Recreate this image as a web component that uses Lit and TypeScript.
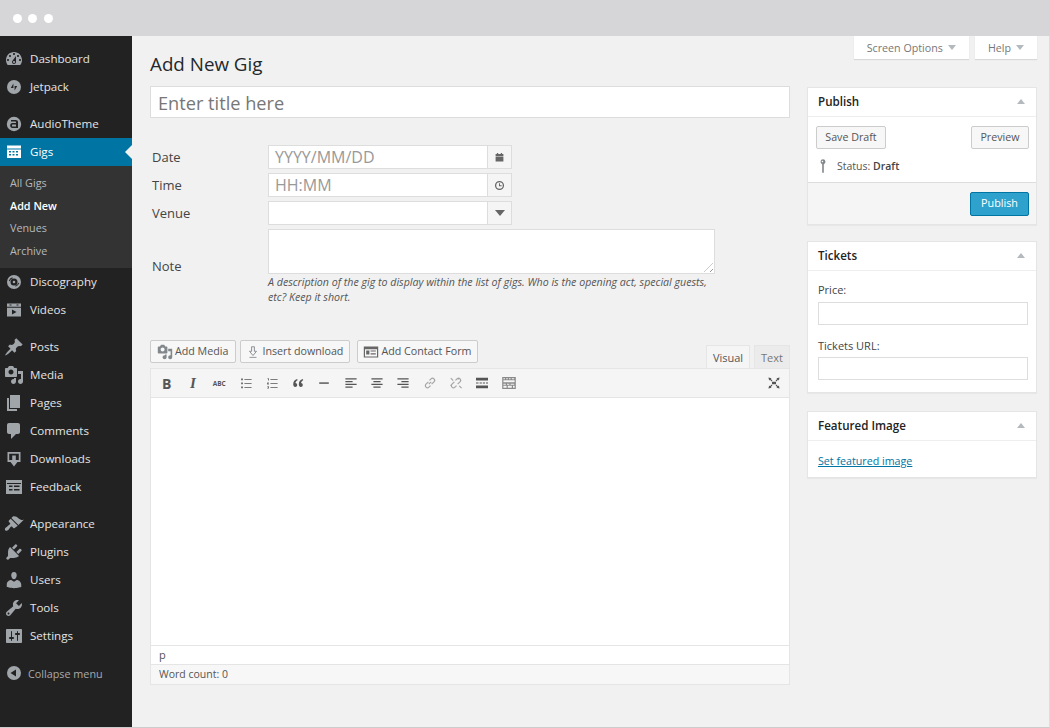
import { LitElement, html, css, svg } from "lit";
import { customElement } from "lit/decorators.js";

const P: Record<string, any> = {
  dashboard: svg`<path d="M3.76 16h12.48c1.1-1.37 1.76-3.11 1.76-5 0-4.42-3.58-8-8-8s-8 3.58-8 8c0 1.89.66 3.63 1.76 5zM10 4c.55 0 1 .45 1 1s-.45 1-1 1-1-.45-1-1 .45-1 1-1zM6 6c.55 0 1 .45 1 1s-.45 1-1 1-1-.45-1-1 .45-1 1-1zm8 0c.55 0 1 .45 1 1s-.45 1-1 1-1-.45-1-1 .45-1 1-1zm-5.37 5.55L12 7v6c0 1.1-.9 2-2 2s-2-.9-2-2c0-.57.24-1.08.63-1.45zM4 10c.55 0 1 .45 1 1s-.45 1-1 1-1-.45-1-1 .45-1 1-1zm12 0c.55 0 1 .45 1 1s-.45 1-1 1-1-.45-1-1 .45-1 1-1zm-5 3c0-.55-.45-1-1-1s-1 .45-1 1 .45 1 1 1 1-.45 1-1z"/>`,
  jetpack: svg`<path fill-rule="evenodd" d="M10 3a7 7 0 1 1 0 14 7 7 0 0 1 0-14zM9.4 6.5 6.8 11h2.6zM10.6 9v4.5l2.6-4.5z"/>`,
  audiotheme: svg`<path fill-rule="evenodd" d="M10 2.8a7.2 7.2 0 1 1 0 14.4 7.2 7.2 0 0 1 0-14.4zM7 6v1.6h4.4c.4 0 .6.2.6.6v.8H8.4C7 9 6.200 9.900 6.200 11.500S7 14 8.400 14H14V8c0-1.300-.8-2-2.200-2zM8.600 10.600H12v1.800H8.600c-.5 0-.7-.3-.7-.9s.2-.9.700-.9z"/>`,
  gigs: svg`<path fill-rule="evenodd" d="M3 3.500h14V16H3zM3 6.500v1h14v-1zM5 9v1.400h2V9zm3.500 0v1.400h2V9zm3.500 0v1.400h2V9zM5 12v1.400h2V12zm3.500 0v1.400h2V12zm3.500 0v1.400h2V12z"/>`,
  discography: svg`<path fill-rule="evenodd" d="M10 3a7 7 0 1 1 0 14 7 7 0 0 1 0-14zm0 3.500a3.500 3.500 0 1 0 0 7 3.500 3.500 0 0 0 0-7zm0 2.200a1.300 1.300 0 1 1 0 2.600 1.300 1.300 0 0 1 0-2.600zM5.700 9.300a4.400 4.400 0 0 1 3-3.100l-.3-.9a5.300 5.300 0 0 0-3.600 3.700zM14.300 10.700a4.400 4.400 0 0 1-3 3.100l.3.9a5.300 5.300 0 0 0 3.600-3.700z"/>`,
  videos: svg`<path fill-rule="evenodd" d="M3 3.500h14v3.200H3zM5.500 4.500v1h2v-1zm7 0v1h2v-1zM3 7.800h14v8.700H3zM8 9.500v5l4.500-2.500z"/>`,
  post: svg`<path d="M10.440 3.020l1.820-1.820 6.360 6.350-1.830 1.820c-1.050-.68-2.480-.57-3.410.36l-.75.75c-.92.93-1.040 2.350-.35 3.410l-1.830 1.820-2.410-2.410-2.800 2.790c-.42.42-3.380 2.710-3.800 2.290s1.860-3.390 2.280-3.810l2.790-2.790L4.100 9.360l1.830-1.820c1.050.69 2.480.57 3.400-.36l.75-.75c.93-.92 1.050-2.350.36-3.410z"/>`,
  media: svg`<path d="M13 11V4c0-.55-.45-1-1-1h-1.670L9 1H5L3.670 3H2c-.55 0-1 .45-1 1v7c0 .55.45 1 1 1h10c.55 0 1-.45 1-1zM7 4.500c1.380 0 2.500 1.120 2.500 2.500S8.380 9.500 7 9.500 4.500 8.380 4.500 7 5.620 4.500 7 4.500zM14 6h5v10.500c0 1.380-1.120 2.500-2.500 2.500S14 17.880 14 16.500s1.120-2.500 2.500-2.500c.17 0 .34.02.5.05V9h-3V6zm-4 8.050V13h2v3.500c0 1.380-1.120 2.500-2.500 2.500S7 17.880 7 16.500 8.120 14 9.500 14c.17 0 .34.02.5.05z"/>`,
  page: svg`<path d="M6 15V2h10v13H6zm-1 1h8v2H3V5h2v11z"/>`,
  comments: svg`<path d="M5 2h9c1.100 0 2 .9 2 2v7c0 1.100-.9 2-2 2h-2l-5 5v-5H5c-1.100 0-2-.9-2-2V4c0-1.100.9-2 2-2z"/>`,
  downloads: svg`<path fill-rule="evenodd" d="M3.500 3h13v10h-3.500v-1.700h1.800V4.700H5.200v6.600H7V13H3.500z"/><path d="M8.200 6.500h3.600V11H15l-5 6.500L5 11h3.200z"/>`,
  feedback: svg`<path fill-rule="evenodd" d="M2 3h16v14H2zM3 6v.9h14V6zM5 8.500v1.500h3.500V8.500zM10 8.500v1.500h5.500V8.500zM5 12v1.500h3.500V12zM10 12v1.500h5.500V12z"/>`,
  appearance: svg`<path d="M14.480 11.060L7.410 3.990l1.500-1.500c.5-.56 2.300-.47 3.510.32 1.210.8 1.430 1.280 2.910 2.100 1.180.64 2.450 1.260 4.450.85zm-.71.71L6.700 4.700 4.930 6.470c-.39.39-.39 1.020 0 1.410l1.060 1.060c.39.39.39 1.030 0 1.420-.6.6-1.430 1.110-2.210 1.690-.35.26-.7.53-1.010.84C1.430 13.230.5 14.700 1.050 15.900c.5 1.100 1.960 1.170 3.210.16.3-.31.57-.66.83-1.010.58-.78 1.090-1.610 1.690-2.210.39-.39 1.020-.39 1.410 0l1.060 1.060c.39.39 1.020.39 1.410 0z"/>`,
  plugins: svg`<path d="M13.110 4.360L9.870 7.600 8 5.730l3.240-3.240c.35-.34 1.050-.2 1.560.32.52.51.66 1.210.31 1.550zm-8 1.770l.91-1.120 9.010 9.010-1.190.84c-.71.71-2.630 1.160-3.820 1.160H6.140L4.900 17.260c-.59.59-1.540.59-2.120 0-.59-.58-.59-1.530 0-2.120l1.240-1.240v-3.880c0-1.130.4-3.190 1.090-3.890zm7.260 3.970l3.240-3.240c.34-.35 1.040-.21 1.550.31.52.51.66 1.210.31 1.550l-3.240 3.250z"/>`,
  users: svg`<path d="M10 9.250c-2.270 0-2.730-3.440-2.730-3.440C7 4.020 7.820 2 9.970 2c2.160 0 2.980 2.020 2.710 3.810 0 0-.41 3.440-2.680 3.440zm0 2.570L12.720 10c2.390 0 4.520 2.330 4.520 4.530v2.490s-3.650 1.130-7.240 1.130c-3.650 0-7.240-1.130-7.240-1.130v-2.490c0-2.250 1.940-4.480 4.470-4.480z"/>`,
  tools: svg`<path d="M16.680 9.770c-1.340 1.340-3.300 1.670-4.950.99l-5.410 6.520c-.99.99-2.590.99-3.580 0s-.99-2.590 0-3.570l6.520-5.420c-.68-1.650-.35-3.610.99-4.950 1.280-1.280 3.120-1.620 4.720-1.060l-2.890 2.890 2.820 2.820 2.860-2.870c.53 1.580.18 3.390-1.080 4.650zM3.810 16.210c.4.39 1.040.39 1.430 0 .4-.4.4-1.040 0-1.430-.39-.4-1.030-.4-1.430 0-.39.39-.39 1.030 0 1.430z"/>`,
  settings: svg`<path d="M18 16V4c0-.55-.45-1-1-1H3c-.55 0-1 .45-1 1v12c0 .55.45 1 1 1h14c.55 0 1-.45 1-1zM8 11h1c.55 0 1 .45 1 1s-.45 1-1 1H8v1.500c0 .28-.22.5-.5.5s-.5-.22-.5-.5V13H6c-.55 0-1-.45-1-1s.45-1 1-1h1V5.500c0-.28.22-.5.5-.5s.5.22.5.5V11zm5-2h-1c-.55 0-1-.45-1-1s.45-1 1-1h1V5.500c0-.28.22-.5.5-.5s.5.22.5.5V7h1c.55 0 1 .45 1 1s-.45 1-1 1h-1v5.500c0 .28-.22.5-.5.5s-.5-.22-.5-.5V9z"/>`,
  collapse: svg`<path fill-rule="evenodd" d="M10 3a7 7 0 1 1 0 14 7 7 0 0 1 0-14zM12 6.500 6.500 10l5.500 3.500z"/>`,
  calendar: svg`<path d="M4 4.500h2V3h2v1.500h4V3h2v1.500h2V8H4zM4 9h12v7H4z"/>`,
  clock: svg`<path fill-rule="evenodd" d="M10 3a7 7 0 1 1 0 14 7 7 0 0 1 0-14zm0 2a5 5 0 1 0 0 10 5 5 0 0 0 0-10zM9.200 6.500h1.500v3.200h2.600v1.500H9.200z"/>`,
  download: svg`<path fill="none" stroke="currentColor" stroke-width="1.300" d="M8 2.500h4v6.500h3l-5 6-5-6h3z"/><path d="M5 17h10v1.200H5z"/>`,
  form: svg`<path fill-rule="evenodd" d="M1 3h18v14H1zM2.500 6.500v9h15v-9zM4 8h4v5H4zM9.500 8H16v1.500H9.500zM9.500 11.500H16V13H9.500z"/><path d="M5 9h2v3H5z"/>`,
  bullist: svg`<path d="M4 4.500h2v2H4zM8 5h9v1H8zM4 9.500h2v2H4zM8 10h9v1H8zM4 14.500h2v2H4zM8 15h9v1H8z"/>`,
  numlist: svg`<path d="M4.500 4H6v3H5V5H4.500zM8 5h9v1H8zM4 9.500h2v1H5v.5h1v1H4zM8 10h9v1H8zM4 14h2v3H4v-.7h1v-.4H4.500v-.7H5v-.4H4zM8 15h9v1H8z"/>`,
  quote: svg`<path d="M9 5C6 6 4 8 4 11.500 4 13.500 5 15 6.500 15S9 14 9 12.500 8 10 6.800 10c.3-1.500 1-2.500 2.700-3.500zM16 5c-3 1-5 3-5 6.500 0 2 1 3.500 2.500 3.500s2.500-1 2.500-2.500-1-2.500-2.200-2.500c.3-1.500 1-2.500 2.700-3.500z"/>`,
  hr: svg`<path d="M4 9.200h12v1.800H4z"/>`,
  left: svg`<path d="M3 4h14v1.500H3zM3 7.500h9V9H3zM3 11h14v1.500H3zM3 14.500h9V16H3z"/>`,
  center: svg`<path d="M3 4h14v1.500H3zM5.500 7.500h9V9h-9zM3 11h14v1.500H3zM5.500 14.500h9V16h-9z"/>`,
  right: svg`<path d="M3 4h14v1.500H3zM8 7.500h9V9H8zM3 11h14v1.500H3zM8 14.500h9V16H8z"/>`,
  link: svg`<path fill="none" stroke="currentColor" stroke-width="1.500" d="M8.500 11.500l3-3M8 8.500 5 11.500a2.600 2.600 0 0 0 3.700 3.700l2-2M12 11.500l3-3A2.600 2.600 0 0 0 11.300 4.800l-2 2"/>`,
  unlink: svg`<path fill="none" stroke="currentColor" stroke-width="1.500" d="M8 8.500 5 11.500a2.600 2.600 0 0 0 3.700 3.700l2-2M12 11.500l3-3A2.600 2.600 0 0 0 11.300 4.800l-2 2M3.500 4l3 3M14 13.500l3 3M13 3.500v2M3 13h2"/>`,
  more: svg`<path d="M2.500 3.500h15v3.500h-15zM2.500 9.300h3.200v1.400H2.500zM7 9.300h2.800v1.400H7zM11 9.300h2.800v1.400H11zM15 9.300h2.500v1.400H15zM2.500 13h15v3.500h-15z"/>`,
  kitchen: svg`<path fill-rule="evenodd" d="M1.500 2.500h17v15h-17zM3 4v1.200h2V4zm3.500 0v1.200h2V4zM10 4v1.200h2V4zm3.500 0v1.200h3V4zM3 6.500V9h14V6.500zM3 11v1.200h3V11zm4.500 0v1.200h3V11zm4.500 0v1.200h4.500V11zM3 13.500V16h4v-2.500zm5.500 0V16h5v-2.500zm6.500 0V16h2v-2.500z"/>`,
  full: svg`<path d="M3 3l4 1-1 1 2 2-1 1-2-2-1 1zM17 3l-1 4-1-1-2 2-1-1 2-2-1-1zM3 17l1-4 1 1 2-2 1 1-2 2 1 1zM17 17l-4-1 1-1-2-2 1-1 2 2 1-1zM7.500 8.500h5v3h-5z"/>`,
  pin: svg`<path fill-rule="evenodd" d="M10 1.500a3.200 3.200 0 0 1 1 6.200V18.500H9V7.700a3.200 3.200 0 0 1 1-6.200zM9.300 3.300a.9.9 0 1 0 .01 0z"/>`,
};

const ic = (n: string, size = 20) =>
  html`<svg class="ic" width=${size} height=${size} viewBox="0 0 20 20" fill="currentColor" aria-hidden="true">${P[n]}</svg>`;

const menu = [
  [["dashboard", "Dashboard"], ["jetpack", "Jetpack"]],
  [["audiotheme", "AudioTheme"], ["gigs", "Gigs", "cur"], ["discography", "Discography"], ["videos", "Videos"]],
  [["post", "Posts"], ["media", "Media"], ["page", "Pages"], ["comments", "Comments"], ["downloads", "Downloads"], ["feedback", "Feedback"]],
  [["appearance", "Appearance"], ["plugins", "Plugins"], ["users", "Users"], ["tools", "Tools"], ["settings", "Settings"]],
];

@customElement("app-root")
export class AppRoot extends LitElement {
  static styles = css`
    :host { display: block; width: 1050px; height: 728px; overflow: hidden; font-family: "Open Sans", sans-serif; color: #444; background: #f1f1f1; box-sizing: border-box; }
    * { box-sizing: border-box; }
    .ic { display: block; flex: none; }
    .chrome { height: 36px; background: #d6d6d8; display: flex; align-items: center; gap: 6.500px; padding-left: 12.500px; }
    .chrome i { width: 9px; height: 9px; border-radius: 50%; background: #fff; }
    .body { display: flex; height: 692px; border-right: 1px solid #ddd; border-bottom: 1px solid #ccc; }
    .side { width: 132px; flex: none; background: #222; padding-top: 9px; font-size: 11.600px; color: #e4e4e4; }
    .grp { margin-bottom: 9px; }
    .item { height: 28px; display: flex; align-items: center; gap: 6px; padding-left: 4px; position: relative; }
    .item span { margin-top: -2px; }
    .item .ic { color: #a0a5aa; }
    .item.cur { background: #0074a2; color: #fff; }
    .item.cur .ic { color: #fff; }
    .item.cur::after { content: ""; position: absolute; right: 0; top: 7px; border: 7px solid transparent; border-right-color: #f1f1f1; border-left-width: 0; }
    .sub { height: 102px; background: #333; padding-top: 6px; font-size: 10.800px; color: #b4b9be; }
    .sub div { height: 22.600px; line-height: 22.600px; padding-left: 10px; }
    .sub .on { color: #fff; font-weight: 600; line-height: 21px; }
    .collapse { display: flex; align-items: center; gap: 4px; padding-left: 4px; height: 28px; margin-top: 9px; font-size: 10.800px; color: #aaa; }
    .collapse .ic { color: #a0a5aa; }
    .main { flex: 1; min-width: 0; padding-left: 18px; }
    .meta { display: flex; justify-content: flex-end; gap: 6px; padding-right: 12px; height: 23px; }
    .meta div { height: 23px; background: #fff; box-shadow: 0 1px 1px rgba(0,0,0,.1); font-size: 10.700px; color: #777; display: flex; align-items: center; gap: 5px; padding: 0 13px; }
    .meta b { border: 4px solid transparent; border-top: 5px solid #b4b9be; border-bottom: 0; }
    .cols { display: flex; gap: 17px; }
    .left { width: 640px; }
    .right { width: 230px; padding-top: 28px; }
    h1 { margin: -9px 0 0; font-size: 18.800px; font-weight: 400; color: #23282d; line-height: 29px; height: 27px; }
    .title { height: 32px; background: #fff; border: 1px solid #ddd; margin-top: 9px; font-size: 18.200px; color: #777; line-height: 32px; padding-left: 7px; }
    .fields { margin-top: 27px; display: grid; grid-template-columns: 118px 1fr; row-gap: 4px; align-items: center; font-size: 13px; }
    .fields label { padding-left: 2px; }
    .fields .note { grid-row: span 2; margin-top: -2px; }
    .inp { display: flex; width: 244px; height: 24px; }
    .inp span { width: 220px; background: #fff; border: 1px solid #ddd; font-size: 16px; color: #999; line-height: 22px; padding-left: 6px; }
    .inp em { width: 24px; background: #f5f5f5; border: 1px solid #ddd; border-left: 0; display: flex; align-items: center; justify-content: center; color: #666; font-style: normal; }
    .inp em b { border: 5px solid transparent; border-top: 6px solid #666; border-bottom: 0; }
    .ta { width: 447px; height: 45px; background: #fff; border: 1px solid #ddd; position: relative; }
    .ta::after { content: ""; position: absolute; right: 1px; bottom: 1px; width: 9px; height: 9px; background: repeating-linear-gradient(135deg, transparent 0 2px, #999 2px 3px, transparent 3px 4px); clip-path: polygon(100% 0, 100% 100%, 0 100%); }
    .desc { grid-column: 2; font-size: 10.650px; font-style: italic; line-height: 15px; width: 447px; color: #555; margin-top: -3px; }
    .edtop { display: flex; margin-top: 35px; height: 28px; align-items: flex-start; }
    .btn { height: 23px; border: 1px solid #ccc; border-radius: 2px; background: #f7f7f7; font-size: 10.700px; color: #555; display: inline-flex; align-items: center; gap: 2px; padding: 0 7px 0 6px; }
    .btn span { margin-top: -2px; }
    .btn .ic { color: #82878c; }
    .btns { display: flex; gap: 4px; }
    .btn.dl { padding: 0 6px 0 5px; gap: 2px; }
    .btn.cf { padding: 0 6px 0 5px; margin-left: 3px; }
    .btn.cf .ic { color: #666; }
    .tabs { margin-left: auto; display: flex; gap: 4px; align-self: flex-end; }
    .tabs div { height: 23px; font-size: 11px; line-height: 23px; text-align: center; border: 1px solid #e5e5e5; border-bottom: 0; }
    .tabs .v { width: 44px; background: #f5f5f5; color: #555; }
    .tabs .t { width: 36px; background: #ebebeb; color: #777; }
    .editor { border: 1px solid #e5e5e5; border-top: 0; }
    .bar { height: 30px; background: #f5f5f5; border-bottom: 1px solid #e5e5e5; border-top: 1px solid #e5e5e5; display: flex; align-items: center; padding-left: 2.500px; padding-right: 2px; color: #555; }
    .tb { width: 26.300px; display: flex; justify-content: center; align-items: center; flex: none; height: 20px; }
    .tb.b { font-size: 14px; font-weight: 700; }
    .tb.i { font-size: 15px; font-style: italic; font-family: "Liberation Serif", serif; font-weight: 700; }
    .tb.a { font-size: 6.500px; font-weight: 700; }
    .faint { color: #a5a5a5; }
    .tb.kit { color: #8a8a8a; }
    .sp { flex: 1; }
    .area { height: 247px; background: #fff; }
    .path { height: 19px; background: #fff; border-top: 1px solid #e5e5e5; font-size: 11px; line-height: 18px; padding-left: 8px; color: #555; }
    .count { height: 20px; background: #f7f7f7; border-top: 1px solid #e5e5e5; font-size: 10.500px; line-height: 19px; padding-left: 8px; color: #555; }
    .box { background: #fff; border: 1px solid #e5e5e5; box-shadow: 0 1px 1px rgba(0,0,0,.04); margin-bottom: 16px; }
    .box.tk { margin-bottom: 18px; }
    .head { height: 29px; border-bottom: 1px solid #eee; display: flex; align-items: center; justify-content: space-between; padding: 0 11px 2px 10px; font-size: 11.600px; font-weight: 600; color: #222; }
    .head b { border: 4px solid transparent; border-bottom: 5px solid #b4b9be; border-top: 0; }
    .row { display: flex; justify-content: space-between; padding: 9px 7px 0 8px; }
    .btn.w { padding: 0 8px; width: 70px; justify-content: center; }
    .btn.w.pv { width: 58px; }
    .status { display: flex; align-items: center; gap: 6px; height: 33px; font-size: 10.500px; padding-left: 7px; color: #555; }
    .status b { font-weight: 600; color: #444; }
    .status .ic { color: #82878c; }
    .foot { height: 42px; background: #f5f5f5; border-top: 1px solid #ddd; display: flex; align-items: center; justify-content: flex-end; padding-right: 7px; }
    .pub { height: 24px; width: 59px; border: 1px solid #0074a2; border-radius: 2px; background: #2ea2cc; color: #fff; font-size: 10.800px; display: flex; align-items: center; justify-content: center; padding-bottom: 2px; }
    .fld { padding: 10px 8px 12px 10px; font-size: 11px; color: #444; }
    .fld label { display: block; line-height: 18px; font-weight: 500; }
    .fld span { display: block; height: 23px; border: 1px solid #ddd; margin-top: 3px; background: #fff; margin-bottom: 12px; }
    .fld .last { margin-top: 2px; margin-bottom: 0; }
    .lnk { display: block; padding: 13px 10px 9px; font-size: 10.700px; line-height: 14px; color: #0074a2; text-decoration: underline; }
  `;

  private tb(n: string, cls = "") {
    return html`<div class="tb ${cls}">${ic(n, 16)}</div>`;
  }

  render() {
    return html`
      <div class="chrome"><i></i><i></i><i></i></div>
      <div class="body">
        <nav class="side">
          ${menu.map((g) => html`<div class="grp">
            ${g.map((m) => html`
              <div class="item ${m[2] || ""}">${ic(m[0])}<span>${m[1]}</span></div>
              ${m[2] ? html`<div class="sub"><div>All Gigs</div><div class="on">Add New</div><div>Venues</div><div>Archive</div></div>` : ""}
            `)}
          </div>`)}
          <div class="collapse">${ic("collapse")}<span>Collapse menu</span></div>
        </nav>
        <main class="main">
          <div class="meta"><div>Screen Options <b></b></div><div>Help <b></b></div></div>
          <div class="cols">
            <div class="left">
              <h1>Add New Gig</h1>
              <div class="title">Enter title here</div>
              <div class="fields">
                <label>Date</label><div class="inp"><span>YYYY/MM/DD</span><em>${ic("calendar", 13)}</em></div>
                <label>Time</label><div class="inp"><span>HH:MM</span><em>${ic("clock", 13)}</em></div>
                <label>Venue</label><div class="inp"><span></span><em><b></b></em></div>
                <label class="note">Note</label><div class="ta"></div>
                <div class="desc">A description of the gig to display within the list of gigs. Who is the opening act, special guests, etc? Keep it short.</div>
              </div>
              <div class="edtop">
                <div class="btns">
                  <div class="btn">${ic("media", 16)}<span>Add Media</span></div>
                  <div class="btn dl">${ic("download", 14)}<span>Insert download</span></div>
                  <div class="btn cf">${ic("form", 16)}<span>Add Contact Form</span></div>
                </div>
                <div class="tabs"><div class="v">Visual</div><div class="t">Text</div></div>
              </div>
              <div class="editor">
                <div class="bar">
                  <div class="tb b">B</div><div class="tb i">I</div><div class="tb a">ABC</div>
                  ${this.tb("bullist")}${this.tb("numlist")}${this.tb("quote")}${this.tb("hr")}
                  ${this.tb("left")}${this.tb("center")}${this.tb("right")}
                  ${this.tb("link", "faint")}${this.tb("unlink", "faint")}${this.tb("more")}${this.tb("kitchen", "kit")}
                  <div class="sp"></div>
                  ${this.tb("full")}
                </div>
                <div class="area"></div>
                <div class="path">p</div>
                <div class="count">Word count: 0</div>
              </div>
            </div>
            <aside class="right">
              <section class="box">
                <div class="head">Publish <b></b></div>
                <div class="row"><div class="btn w"><span>Save Draft</span></div><div class="btn w pv"><span>Preview</span></div></div>
                <div class="status">${ic("pin", 16)}<span>Status: <b>Draft</b></span></div>
                <div class="foot"><div class="pub">Publish</div></div>
              </section>
              <section class="box tk">
                <div class="head">Tickets <b></b></div>
                <div class="fld"><label>Price:</label><span></span><label>Tickets URL:</label><span class="last"></span></div>
              </section>
              <section class="box">
                <div class="head">Featured Image <b></b></div>
                <a class="lnk">Set featured image</a>
              </section>
            </aside>
          </div>
        </main>
      </div>
    `;
  }
}
